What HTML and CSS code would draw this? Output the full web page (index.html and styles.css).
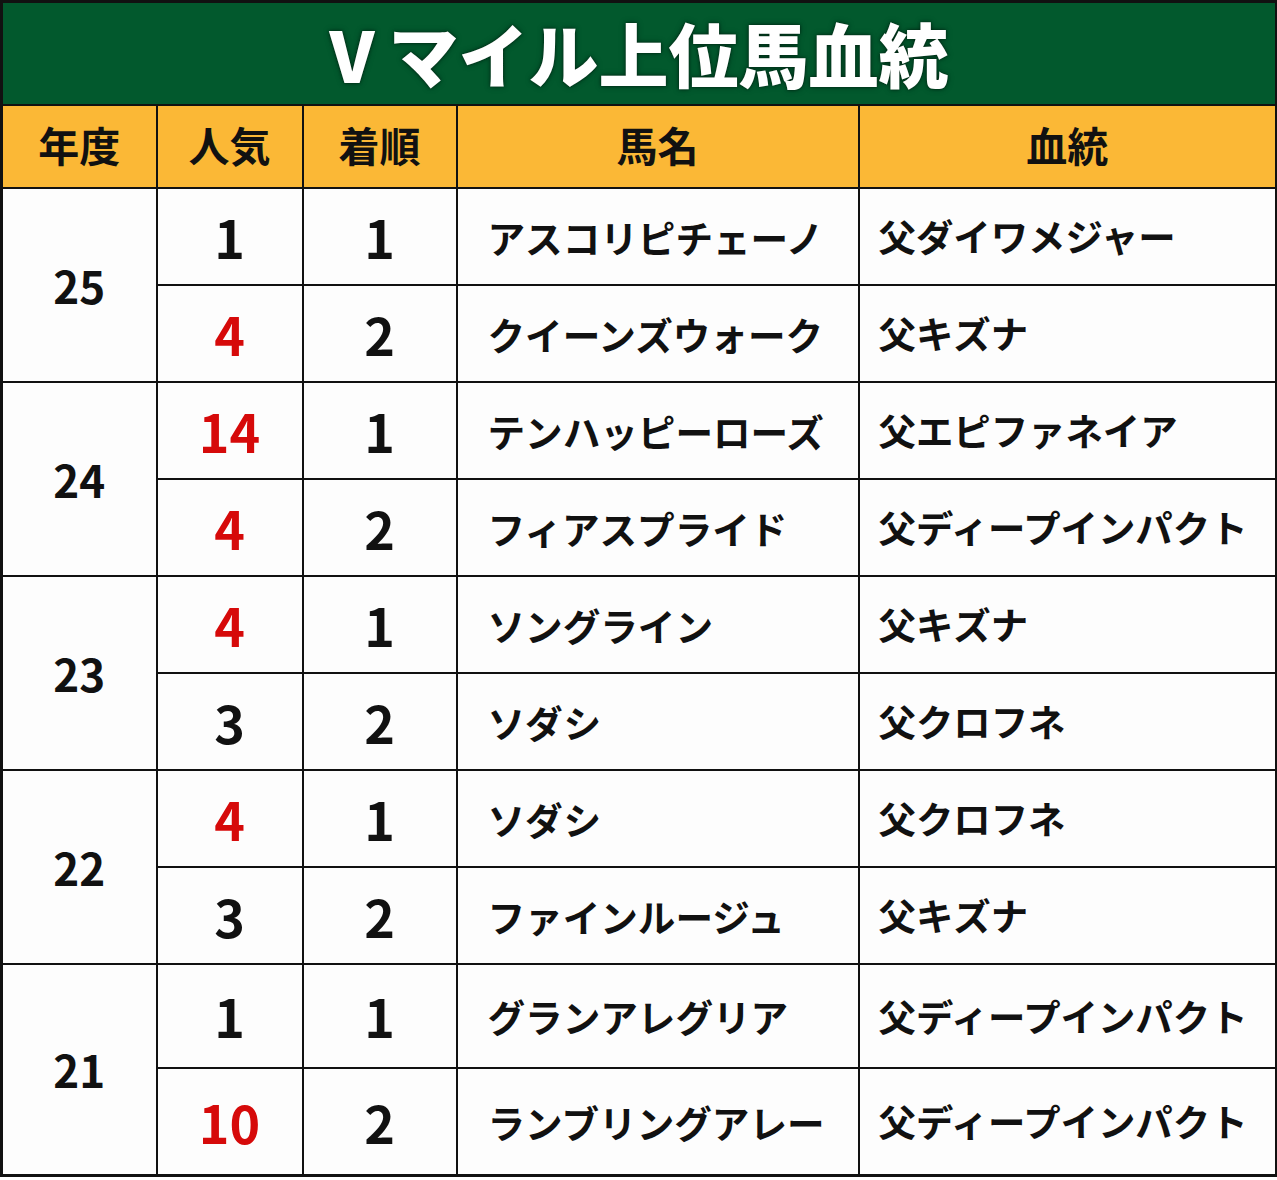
FILE: index.html
```html
<!DOCTYPE html>
<html lang="ja">
<head>
<meta charset="utf-8">
<link rel="stylesheet" href="styles.css">
</head>
<body>
<table class="tbl">
  <colgroup>
    <col class="c-year"><col class="c-pop"><col class="c-rank"><col class="c-name"><col class="c-blood">
  </colgroup>
  <thead>
    <tr class="title-row"><th colspan="5" class="title"><span class="v">V</span>マイル上位馬血統</th></tr>
    <tr class="head-row"><th>年度</th><th>人気</th><th>着順</th><th>馬名</th><th>血統</th></tr>
  </thead>
  <tbody>
    <tr class="r"><td rowspan="2" class="year">25</td><td class="num">1</td><td class="num">1</td><td class="name">アスコリピチェーノ</td><td class="blood">父ダイワメジャー</td></tr>
    <tr class="r"><td class="num red">4</td><td class="num">2</td><td class="name">クイーンズウォーク</td><td class="blood">父キズナ</td></tr>
    <tr class="r"><td rowspan="2" class="year">24</td><td class="num red">14</td><td class="num">1</td><td class="name">テンハッピーローズ</td><td class="blood">父エピファネイア</td></tr>
    <tr class="r"><td class="num red">4</td><td class="num">2</td><td class="name">フィアスプライド</td><td class="blood">父ディープインパクト</td></tr>
    <tr class="r"><td rowspan="2" class="year">23</td><td class="num red">4</td><td class="num">1</td><td class="name">ソングライン</td><td class="blood">父キズナ</td></tr>
    <tr class="r"><td class="num">3</td><td class="num">2</td><td class="name">ソダシ</td><td class="blood">父クロフネ</td></tr>
    <tr class="r"><td rowspan="2" class="year">22</td><td class="num red">4</td><td class="num">1</td><td class="name">ソダシ</td><td class="blood">父クロフネ</td></tr>
    <tr class="r"><td class="num">3</td><td class="num">2</td><td class="name">ファインルージュ</td><td class="blood">父キズナ</td></tr>
    <tr class="r r-a"><td rowspan="2" class="year">21</td><td class="num">1</td><td class="num">1</td><td class="name">グランアレグリア</td><td class="blood">父ディープインパクト</td></tr>
    <tr class="r r-b"><td class="num red">10</td><td class="num">2</td><td class="name">ランブリングアレー</td><td class="blood">父ディープインパクト</td></tr>
  </tbody>
</table>
</body>
</html>
```
FILE: styles.css
```css
html, body {
  margin: 0;
  padding: 0;
  background: #ffffff;
}
body {
  font-family: "Noto Sans CJK JP", "Noto Sans", sans-serif;
  color: #111;
}
.tbl {
  width: 1275px;
  border-collapse: collapse;
  table-layout: fixed;
  border: 3px solid #111;
}
.c-year { width: 155px; }
.c-pop { width: 146px; }
.c-rank { width: 154px; }
.c-name { width: 402px; }
.c-blood { width: 418px; }

.tbl th, .tbl td {
  border: 2px solid #111;
  padding: 0;
}
.title-row { height: 103px; }
.title {
  background: #02592d;
  color: #fff;
  font-size: 70px;
  font-weight: 900;
  text-align: center;
  line-height: 1;
  text-shadow: 0 0 3px rgba(0,0,0,0.55), 0 0 6px rgba(0,0,0,0.35);
  padding-bottom: 8px;
}
.v { margin-right: 14px; }
.head-row { height: 83px; }
.head-row th {
  background: #fbb836;
  font-size: 41px;
  font-weight: 700;
  color: #111;
  text-align: center;
  padding-bottom: 4px;
}
.r { height: 97px; }
.r-a { height: 104px; }
.r-b { height: 108px; }
.tbl td { background: #fdfdfd; }
.year {
  text-align: center;
  font-size: 44px;
  font-weight: 700;
  padding-bottom: 8px;
}
.num {
  text-align: center;
  font-size: 52px;
  font-weight: 700;
}
.red { color: #d60a0a; }
.name {
  font-size: 37.6px;
  font-weight: 700;
  padding-left: 30px;
  white-space: nowrap;
}
.blood {
  font-size: 37.4px;
  font-weight: 700;
  padding-left: 19px;
  white-space: nowrap;
}
.tbl td.name { padding-left: 30px; }
.tbl td.blood { padding-left: 19px; }
```
